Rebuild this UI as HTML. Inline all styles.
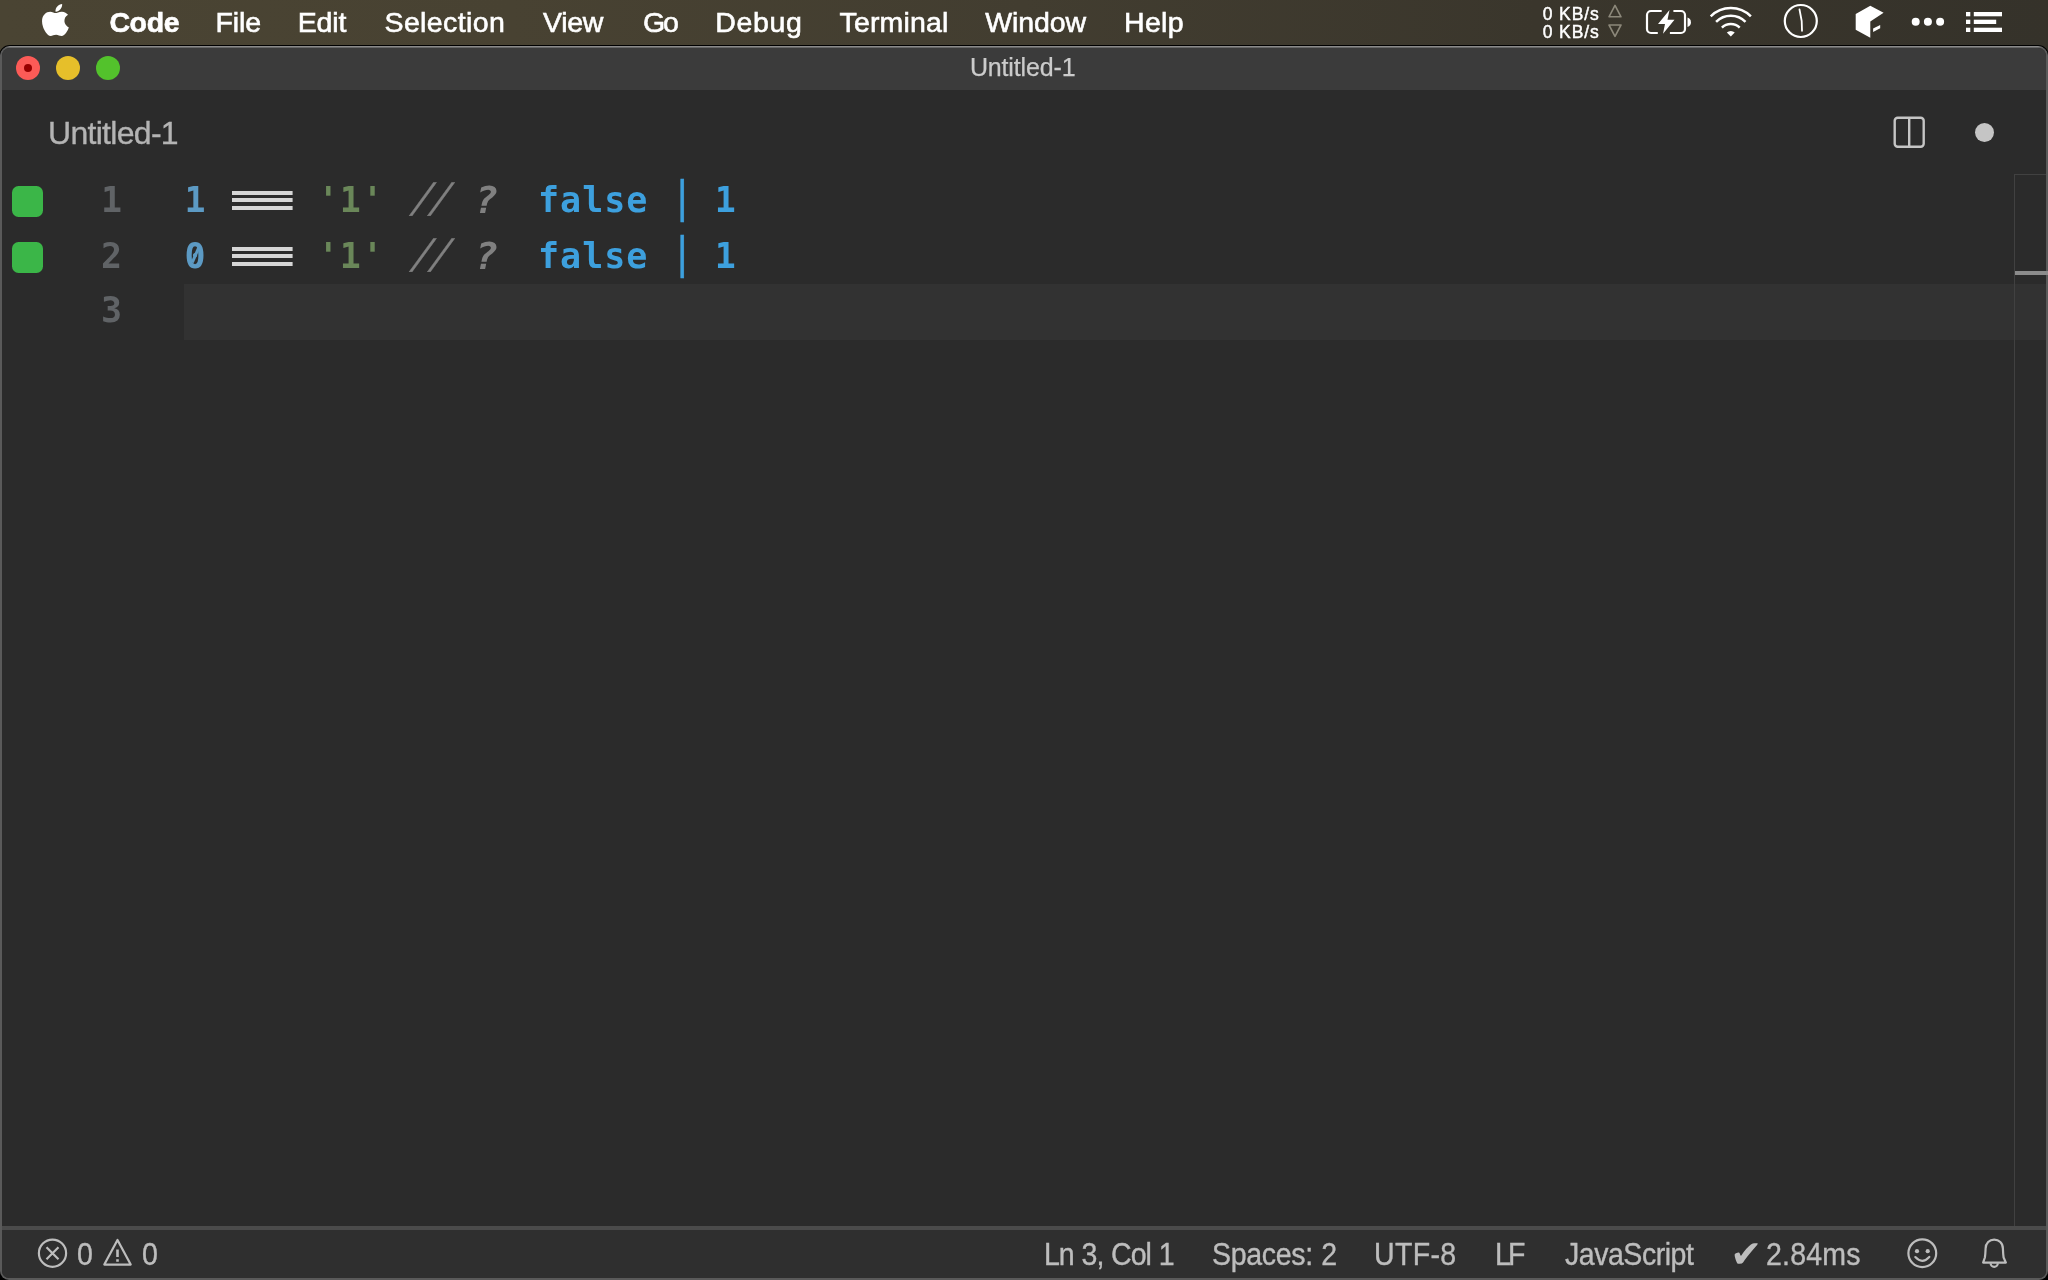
<!DOCTYPE html>
<html lang="en">
<head>
<meta charset="utf-8">
<title>Untitled-1</title>
<style>
*{margin:0;padding:0;box-sizing:border-box}
html,body{width:2048px;height:1280px;overflow:hidden;background:#000}
body{position:relative;will-change:transform;font-family:"Liberation Sans",sans-serif;-webkit-font-smoothing:antialiased}
.abs{position:absolute;white-space:pre}
/* ---------- macOS menu bar ---------- */
#menubar{position:absolute;left:0;top:0;width:2048px;height:62px;
  background:linear-gradient(90deg,#4a4433 0%,#484232 25%,#423d30 50%,#3a362c 75%,#35322a 100%)}
.mi{position:absolute;top:5px;height:34px;line-height:34px;font-size:28.5px;color:#fff;white-space:pre;-webkit-text-stroke:.6px}
.net{position:absolute;left:1542.8px;font-size:17.5px;line-height:18px;color:#fff;white-space:pre;letter-spacing:.86px;-webkit-text-stroke:.45px}
/* ---------- window ---------- */
#outline{position:absolute;left:-1px;top:44.600px;width:2050px;height:1240px;background:#000;border-radius:11px}
#win{position:absolute;left:0;top:46px;width:2048px;height:1234px;border-radius:10px 10px 9px 9px;background:#5a5a5a;overflow:hidden}
#winhl{position:absolute;left:0;top:0;width:2048px;height:14px;border-radius:10px 10px 0 0;
  background:linear-gradient(180deg,#8a8a8a 0,#8a8a8a 1px,#666 1px,#666 2px,#5a5a5a 2px)}
#inner{position:absolute;left:2px;top:2px;width:2044px;height:1230px;border-radius:8px 8px 7px 7px;background:#2b2b2b;overflow:hidden}
#titlebar{position:absolute;left:0;top:0;width:2044px;height:42px;background:#3b3b3b}
.tl{position:absolute;top:8px;width:24px;height:24px;border-radius:50%}
#wtitle{left:967.9px;top:4px;font-size:25px;line-height:30px;color:#cbcbcb;letter-spacing:-.15px;-webkit-text-stroke:.25px}
#tab{left:46px;top:65px;font-size:32px;line-height:40px;color:#b4b4b4;letter-spacing:-.7px;-webkit-text-stroke:.35px}
/* ---------- editor ---------- */
.ln{position:absolute;left:60px;width:60px;text-align:right;height:56px;line-height:56px;
  font-family:"DejaVu Sans Mono","Liberation Mono",monospace;font-size:35px;color:#606366}
.code{position:absolute;left:182px;height:56px;line-height:56px;white-space:pre;
  font-family:"DejaVu Sans Mono","Liberation Mono",monospace;font-size:35px;letter-spacing:1.04px;color:#a9b7c6}
.num{color:#5c9ac4;position:relative;left:.5px}.str{color:#6a8759;position:relative;left:1px}.cmt{color:#808080;font-style:italic}
.code,.ln{font-weight:bold}
.sl{display:inline-block;transform-origin:0 40px;transform:matrix(.826,0,-.424,1.16,5.4,-.1);-webkit-text-stroke:.4px}
.qm{display:inline-block;transform:translateX(3.9px) scale(1.14,1.06)}
.q{color:#3da0de}
.zs{position:absolute;left:9.200px;top:11.400px;width:2.600px;height:16px;background:#5c9ac4;transform:rotate(23deg)}
.pipe{display:inline-block;font-weight:normal;-webkit-text-stroke:.6px;transform:translate(1.1px,-2.4px) scaleY(1.2)}
.eq{display:inline-block;height:56px;vertical-align:top;color:transparent;background:
  linear-gradient(#d6d6d6,#d6d6d6) 3.6px 19px/60.6px 4px no-repeat,
  linear-gradient(#d6d6d6,#d6d6d6) 3.6px 26px/60.6px 4px no-repeat,
  linear-gradient(#d6d6d6,#d6d6d6) 3.6px 33.500px/60.6px 4px no-repeat}
.sq{position:absolute;left:9.8px;width:30.8px;height:31.5px;border-radius:6.5px;background:#3bb648}
#curline{position:absolute;left:182px;top:236px;width:1862px;height:56px;background:#323232}
#ruler{position:absolute;left:2012px;top:126px;width:32px;height:1054px;border-left:1px solid #414141;border-top:1px solid #414141}
#rulermark{position:absolute;left:2015px;top:225px;width:33px;height:4.300px;background:#8c8c8c}
/* ---------- status bar ---------- */
#status{position:absolute;left:0;top:1178px;width:2044px;height:52px;background:#2f2f2f;border-top:4px solid #4b4b4b}
.st{position:absolute;top:1189px;height:36px;line-height:36px;font-size:31px;word-spacing:1px;transform:scaleX(.92);transform-origin:0 0;-webkit-text-stroke:.4px;color:#bdbdbd;white-space:pre}
svg{position:absolute;overflow:visible}
</style>
</head>
<body>
<div id="menubar">
  <svg style="left:42px;top:4px" width="27" height="32" viewBox="4 32 378 449"><path fill="#fff" d="M318.7 268.7c-.2-36.7 16.4-64.4 50-84.8-18.8-26.9-47.2-41.7-84.7-44.6-35.5-2.8-74.3 20.7-88.5 20.7-15 0-49.4-19.7-76.4-19.7C63.3 141.2 4 184.8 4 273.5q0 39.3 14.4 81.2c12.800 36.700 59 126.700 107.200 125.200 25.200-.6 43-17.900 75.800-17.900 31.800 0 48.300 17.900 76.400 17.900 48.600-.7 90.400-82.500 102.600-119.300-65.200-30.700-61.700-90-61.700-91.900zm-56.600-164.200c27.300-32.400 24.800-61.900 24-72.500-24.100 1.400-52 16.400-67.900 34.900-17.500 19.800-27.800 44.300-25.600 71.900 26.100 2 49.900-11.400 69.500-34.300z"/></svg>
  <div class="mi" id="m0" style="left:109.4px;letter-spacing:-0.37px;font-weight:bold">Code</div>
  <div class="mi" id="m1" style="left:215.4px;letter-spacing:-0.1px">File</div>
  <div class="mi" id="m2" style="left:297.7px;letter-spacing:-0.13px">Edit</div>
  <div class="mi" id="m3" style="left:384.5px;letter-spacing:0.38px">Selection</div>
  <div class="mi" id="m4" style="left:543.0px;letter-spacing:-0.33px">View</div>
  <div class="mi" id="m5" style="left:643.1px;letter-spacing:-2.3px">Go</div>
  <div class="mi" id="m6" style="left:715.3px;letter-spacing:0.65px">Debug</div>
  <div class="mi" id="m7" style="left:839.6px;letter-spacing:0.14px">Terminal</div>
  <div class="mi" id="m8" style="left:985.2px;letter-spacing:-0.1px">Window</div>
  <div class="mi" id="m9" style="left:1124.0px;letter-spacing:0.33px">Help</div>
  <div class="net" id="n0" style="top:5px">0 KB/s</div>
  <div class="net" id="n1" style="top:23px">0 KB/s</div>
  <svg id="mbicons" style="left:1600px;top:0" width="448" height="45" viewBox="1600 0 448 45">
    <!-- net arrows -->
    <path d="M1615 5.400 L1621 16.800 H1609 Z" fill="none" stroke="#8c887a" stroke-width="1.600" stroke-linejoin="round"/>
    <path d="M1615 36.300 L1621 25 H1609 Z" fill="none" stroke="#8c887a" stroke-width="1.600" stroke-linejoin="round"/>
    <!-- battery -->
    <path d="M1661.700 11 H1651 a4 4 0 0 0 -4 4 V29 a4 4 0 0 0 4 4 H1657.800 M1673.400 11 H1681 a4 4 0 0 1 4 4 V29 a4 4 0 0 1 -4 4 H1669.900" fill="none" stroke="#fff" stroke-width="2.200"/>
    <path d="M1687.500 17.500 a5 5 0 0 1 0 9.500 Z" fill="#fff"/>
    <path d="M1669.500 10 L1658 24 H1665 L1663 33.800 L1674.500 19.700 H1667.500 Z" fill="#fff"/>
    <!-- wifi -->
    <g fill="none" stroke="#fff" stroke-width="2.500" stroke-linecap="butt">
      <path d="M1710.720 16.420 A28.400 28.400 0 0 1 1750.880 16.420"/>
      <path d="M1716.090 21.790 A20.800 20.800 0 0 1 1745.510 21.790"/>
      <path d="M1721.890 27.590 A12.600 12.600 0 0 1 1739.710 27.590"/>
    </g>
    <path d="M1730.800 36.500 L1726.840 32.540 A5.600 5.600 0 0 1 1734.760 32.540 Z" fill="#fff"/>
    <!-- clock -->
    <circle cx="1800.800" cy="21" r="16" fill="none" stroke="#fff" stroke-width="2.200"/>
    <path d="M1799.500 9.500 L1801.700 21 L1802 30.800" fill="none" stroke="#fff" stroke-width="1.800" stroke-linecap="round" stroke-linejoin="round"/>
    <!-- box -->
    <path d="M1855.700 14 L1870.300 5.700 L1883.600 12.700 L1870.300 21.600 V37.800 L1855.700 29.800 Z" fill="#fff"/>
    <path d="M1873.100 28.600 L1880.200 25.100 V28.200 L1873.100 32 Z" fill="#fff"/>
    <!-- dots -->
    <circle cx="1915.700" cy="21.800" r="4" fill="#fff"/><circle cx="1927.900" cy="21.800" r="4" fill="#fff"/><circle cx="1940.100" cy="21.800" r="4" fill="#fff"/>
    <!-- list -->
    <g fill="#fff">
      <rect x="1966" y="12" width="4.300" height="4.300"/><rect x="1973.800" y="12" width="28.200" height="4.300"/>
      <rect x="1966" y="19.700" width="4.300" height="4.300"/><rect x="1973.800" y="19.700" width="22.400" height="4.300"/>
      <rect x="1966" y="27.700" width="4.300" height="4.300"/><rect x="1973.800" y="27.700" width="28.200" height="4.300"/>
    </g>
  </svg>
</div>
<div id="outline"></div>
<div id="win">
  <div id="winhl"></div>
  <div id="inner">
    <div id="titlebar">
      <div class="tl" style="left:14px;background:#fc5b57"><div style="position:absolute;left:8px;top:8px;width:8px;height:8px;border-radius:50%;background:#970000"></div></div>
      <div class="tl" style="left:54px;background:#e6bf2a"></div>
      <div class="tl" style="left:94px;background:#53c22c"></div>
      <div class="abs" id="wtitle">Untitled-1</div>
    </div>
    <div class="abs" id="tab">Untitled-1</div>
    <svg style="left:1891px;top:67.500px" width="34" height="34" viewBox="0 0 34 34">
      <rect x="1.700" y="1.700" width="29" height="29" rx="3" fill="none" stroke="#c5c5c5" stroke-width="2.400"/>
      <path d="M16.200 2 V30" stroke="#c5c5c5" stroke-width="2.400"/>
    </svg>
    <div style="position:absolute;left:1973px;top:75px;width:19px;height:19px;border-radius:50%;background:#c5c5c5"></div>

    <div id="curline"></div>
    <div class="sq" style="top:137.5px"></div>
    <div class="sq" style="top:193.5px"></div>
    <div class="ln" style="top:124px">1</div>
    <div class="ln" style="top:180px">2</div>
    <div class="ln" style="top:234px">3</div>
    <div class="code" id="c1" style="top:124px"><span class="num">1</span> <span class="eq">===</span> <span class="str">'1'</span> <span class="cmt"><span class="sl">//</span> <span class="qm">?</span></span>  <span class="q">false <span class="pipe">|</span> 1</span></div>
    <div class="code" id="c2" style="top:180px"><span class="num">0<i class="zs"></i></span> <span class="eq">===</span> <span class="str">'1'</span> <span class="cmt"><span class="sl">//</span> <span class="qm">?</span></span>  <span class="q">false <span class="pipe">|</span> 1</span></div>
    <div id="ruler"></div>

    <div id="status"></div>
    <svg style="left:0;top:1178px" width="2044" height="52" viewBox="2 1226 2044 52">
      <g fill="none" stroke="#bdbdbd" stroke-width="2.200">
        <circle cx="52.500" cy="1253.200" r="13.600"/>
        <path d="M46.500 1247.200 L58.500 1259.200 M58.500 1247.200 L46.500 1259.200"/>
        <path d="M117.500 1239.900 L130.700 1264.600 H104.300 Z" stroke-linejoin="round"/>
        <path d="M117.500 1249.500 V1257" stroke-width="2.600"/>
        <path d="M117.500 1259.200 V1261.800" stroke-width="2.600"/>
        <circle cx="1922.300" cy="1253.200" r="13.900"/>
        <path d="M1915.300 1257.100 Q1922.200 1264.600 1929.300 1256.900" stroke-linecap="round"/>
        <path d="M1983.100 1262.600 L1984.900 1257.500 C1985.400 1254 1985.500 1251 1985.600 1248.600 C1985.600 1243 1989.500 1239.600 1994.200 1239.600 C1998.900 1239.600 2002.900 1243 2002.900 1248.600 C2003 1251 2003.100 1254 2003.600 1257.500 L2005.900 1262.600 Z" stroke-linejoin="round"/>
        <path d="M1990.600 1263.200 A3.600 3.600 0 0 0 1997.800 1263.200"/>
      </g>
      <circle cx="1917" cy="1251.200" r="2.100" fill="#bdbdbd"/><circle cx="1927.700" cy="1251.200" r="2.100" fill="#bdbdbd"/>
    </svg>
    <div class="st" id="s0" style="left:75.4px;letter-spacing:0px">0</div>
    <div class="st" id="s1" style="left:140.3px;letter-spacing:0px">0</div>
    <div class="st" id="s2" style="left:1042.0px;letter-spacing:-1.1px">Ln 3, Col 1</div>
    <div class="st" id="s3" style="left:1210.1px;letter-spacing:-0.36px">Spaces: 2</div>
    <div class="st" id="s4" style="left:1372.0px;letter-spacing:0.35px">UTF-8</div>
    <div class="st" id="s5" style="left:1492.8px;letter-spacing:-3.0px">LF</div>
    <div class="st" id="s6" style="left:1563.3px;letter-spacing:-0.51px">JavaScript</div>
    <div class="st" id="s7a" style="left:1728.3px;top:1188px;font-family:'DejaVu Sans',sans-serif;font-size:38px;transform:none;-webkit-text-stroke:0">✔</div>
    <div class="st" id="s7b" style="left:1763.9px;letter-spacing:.22px">2.84ms</div>
  </div>
  <div id="rulermark"></div>
</div>
</body>
</html>
